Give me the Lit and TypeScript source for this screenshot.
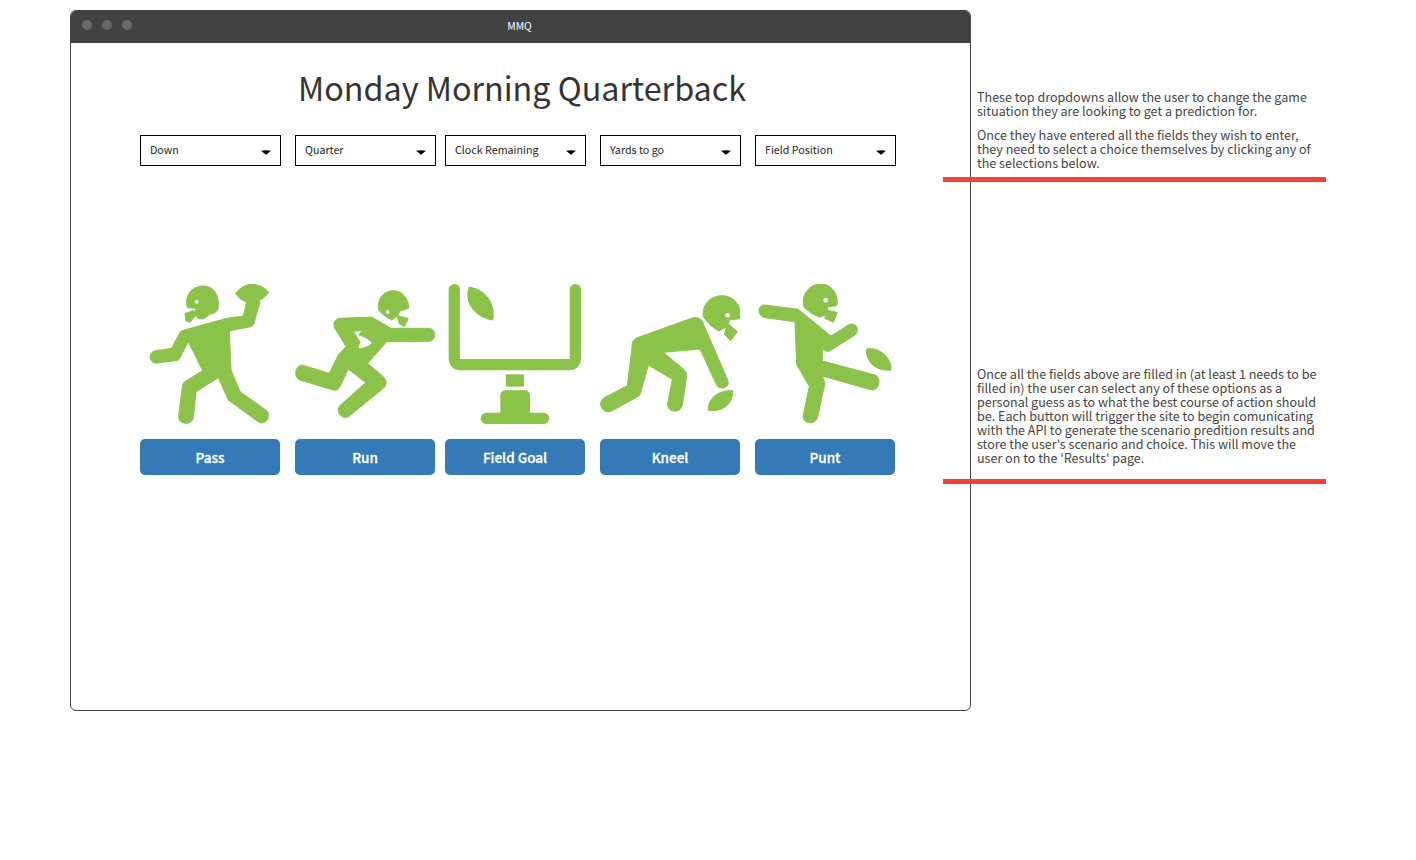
import { LitElement, html, svg, css } from 'lit';
import { customElement } from 'lit/decorators.js';

// Icon paths are in 3x zoom coordinates of the reference, hence the odd viewBoxes
const ICONS = {
  pass: svg`
    <path d="M157 98C148 60 172 33 205 33C235 33 252 58 250 95C249 105 244 112 236 115C224 112 214 132 198 132C189 132 183 126 180 118L183 100Z"/>
    <path d="M150 116L176 106L183 120L165 142L153 138Z"/>
    <circle class="hole" cx="185" cy="80" r="6"/>
    <path d="M145 166L275 130L325 123L335 80L375 80L357 145C354 153 349 155 343 156L283 167L288 285L315 350L393 405C410 418 395 452 372 442L280 375L250 308L183 350L175 427C172 453 128 450 131 423L142 335C143 326 146 322 152 318L203 287L160 200L135 248C132 254 128 256 122 257L66 264C40 266 39 230 62 227L110 220L135 172C137 169 141 167 145 166Z"/>
    <path d="M302 55C318 36 335 28 350 28C370 28 388 36 401 52C388 71 368 82 350 83C330 83 312 73 302 55Z"/>`,
  run: svg`
    <path d="M281 105C275 75 295 47 325 47C352 47 372 72 371 100L345 108L338 122L320 135L303 125L290 115Z"/>
    <path d="M336 122L370 130L358 155L342 145Z"/>
    <circle class="hole" cx="308" cy="111" r="6"/>
    <path fill-rule="evenodd" d="M165 130L260 126L318 160L430 160C456 160 456 199 430 199L305 200L248 265L295 305C305 314 307 330 295 340L193 423C172 438 147 408 167 390L242 323L190 282L165 335C160 345 152 347 145 345L45 315C22 306 32 262 58 272L133 295L160 240L183 215L150 160C142 146 150 131 165 130ZM205 170L232 165L222 180C240 185 252 192 262 204C250 216 235 222 218 220L225 200Z"/>`,
  goal: svg`
    <path class="line" d="M43 44V252A17 17 0 0 0 60 269H389A17 17 0 0 0 406 252V44"/>
    <rect x="198" y="298" width="54" height="37"/>
    <rect x="181" y="346" width="89" height="80" rx="15"/>
    <rect x="122" y="413" width="206" height="34" rx="17"/>
    <path d="M87 37C125 40 168 75 158 135C115 130 70 90 87 37Z"/>`,
  kneel: svg`
    <path d="M325 125C320 90 345 62 382 62C415 62 437 90 437 122C437 130 433 132 428 132L405 134L393 157L370 168L345 150Z"/>
    <path d="M398 145L427 170L407 197L388 178Z"/>
    <circle class="hole" cx="398" cy="121" r="7"/>
    <path d="M130 187L295 128C308 125 318 132 323 142L398 315C408 336 375 348 365 330L315 222L205 232L268 285C274 291 276 297 275 305L262 390C257 418 214 413 218 385L232 313L160 270L138 350C136 358 134 362 128 365L50 408C24 420 3 383 28 368L97 332L112 207C113 197 120 190 130 187Z"/>
    <path d="M340 406C338 370 370 345 413 347C415 380 390 412 340 406Z"/>`,
  punt: svg`
    <path d="M163 98C150 62 178 27 212 27C240 27 262 50 262 82C262 90 260 93 255 93L235 95L225 120L208 127L185 115Z"/>
    <path d="M226 105L262 112L250 142L225 130Z"/>
    <circle class="hole" cx="227" cy="76" r="7"/>
    <path d="M45 90L145 103L243 183L295 150C318 138 333 168 312 182L240 227C232 231 224 228 217 220L217 258L375 300C396 308 388 350 362 344L217 303L225 325L203 425C196 455 154 445 160 420L178 335L140 268L135 140L45 128C20 124 22 88 45 90Z"/>
    <path d="M350 222C385 215 425 245 423 285C385 290 345 265 350 222Z"/>`,
};

const CHOICES = [
  { label: 'Pass', icon: ICONS.pass, box: '15 27 420 420' },
  { label: 'Run', icon: ICONS.run, box: '30 27 420 420' },
  { label: 'Field Goal', icon: ICONS.goal, box: '15 27 420 420' },
  { label: 'Kneel', icon: ICONS.kneel, box: '15 27 420 420' },
  { label: 'Punt', icon: ICONS.punt, box: '15 27 420 420' },
];

const DROPDOWNS = ['Down', 'Quarter', 'Clock Remaining', 'Yards to go', 'Field Position'];

@customElement('app-root')
export class AppRoot extends LitElement {
  static styles = css`
    :host {
      display: block;
      position: relative;
      height: 860px;
      overflow: hidden;
      background: #fff;
      font-family: "Noto Sans CJK SC", "Noto Sans", sans-serif;
      color: #333;
    }

    .window {
      box-sizing: border-box;
      width: 901px;
      height: 701px;
      margin: 10px 0 0 70px;
      display: flex;
      flex-direction: column;
      border: 1px solid #444;
      border-radius: 6px;
      overflow: hidden;
    }

    .titlebar {
      position: relative;
      flex: none;
      height: 32px;
      padding: 0 2px 2px 0;
      box-sizing: border-box;
      display: flex;
      align-items: center;
      justify-content: center;
      background: #424242;
      color: #fff;
      font-size: 10.4px;
      line-height: 14px;
    }

    .dots {
      position: absolute;
      left: 10.5px;
      top: 9px;
      display: flex;
      gap: 10px;
    }

    .dots span {
      width: 10px;
      height: 10px;
      border-radius: 50%;
      background: #686868;
    }

    .page {
      flex: 1;
      padding: 0 0 0 69px;
    }

    h1 {
      margin: 21px 0 25px;
      width: 764px;
      text-align: center;
      font-size: 32.3px;
      font-weight: 400;
      line-height: 46px;
      color: #333;
    }

    .row {
      display: grid;
      grid-template-columns: 155px 150px 155px 155px 141px;
    }

    .dropdown {
      box-sizing: border-box;
      width: 141px;
      height: 31px;
      padding: 0 9px 2px 9px;
      display: flex;
      align-items: center;
      justify-content: space-between;
      border: 1px solid #000;
      background: #fff;
      color: #222;
      font-size: 10.7px;
    }

    .dropdown svg {
      width: 10px;
      height: 5px;
      margin-top: 5px;
    }

    .choices {
      margin-top: 118px;
    }

    .choice {
      width: 140px;
      display: flex;
      flex-direction: column;
      gap: 15px;
    }

    .choice svg {
      display: block;
      width: 140px;
      height: 140px;
      fill: #8bc34a;
    }

    .choice svg path:not(.line) {
      stroke: #8bc34a;
      stroke-width: 3;
      stroke-linejoin: round;
    }

    .choice .hole {
      fill: #fff;
    }

    .choice .line {
      fill: none;
      stroke: #8bc34a;
      stroke-width: 34;
      stroke-linecap: round;
    }

    button {
      height: 36px;
      padding: 0;
      border: none;
      border-radius: 5px;
      background: #337ab7;
      color: #fff;
      font: 500 13.5px "Noto Sans CJK SC", "Noto Sans", sans-serif;
      -webkit-text-stroke: 0.3px #fff;
    }

    /* annotations sit on the free canvas beside the window */
    .note {
      position: absolute;
      left: 977px;
      width: 345px;
      color: #444;
      font-size: 12.55px;
      line-height: 14px;
    }

    .note p {
      margin: 0 0 10px;
    }

    .rule {
      position: absolute;
      left: 943px;
      width: 383px;
      height: 5px;
      background: #f44336;
    }
  `;

  render() {
    return html`
      <div class="window">
        <div class="titlebar">
          <div class="dots"><span></span><span></span><span></span></div>
          MMQ
        </div>
        <div class="page">
          <h1>Monday Morning Quarterback</h1>
          <div class="row">
            ${DROPDOWNS.map(d => html`
              <div class="dropdown">
                <span>${d}</span>
                <svg viewBox="0 0 11 5"><path d="M0 .5Q5.5-.5 11 .5L5.5 5Z"/></svg>
              </div>
            `)}
          </div>
          <div class="row choices">
            ${CHOICES.map(c => html`
              <div class="choice">
                <svg viewBox=${c.box}>${c.icon}</svg>
                <button>${c.label}</button>
              </div>
            `)}
          </div>
        </div>
      </div>

      <div class="note" style="top: 90px">
        <p>These top dropdowns allow the user to change the game situation they are looking to get a prediction for.</p>
        <p>Once they have entered all the fields they wish to enter, they need to select a choice themselves by clicking any of the selections below.</p>
      </div>
      <div class="rule" style="top: 177px"></div>

      <div class="note" style="top: 367px">
        <p>Once all the fields above are filled in (at least 1 needs to be filled in) the user can select any of these options as a personal guess as to what the best course of action should be. Each button will trigger the site to begin comunicating with the API to generate the scenario predition results and store the user's scenario and choice. This will move the user on to the 'Results' page.</p>
      </div>
      <div class="rule" style="top: 479px"></div>
    `;
  }
}
